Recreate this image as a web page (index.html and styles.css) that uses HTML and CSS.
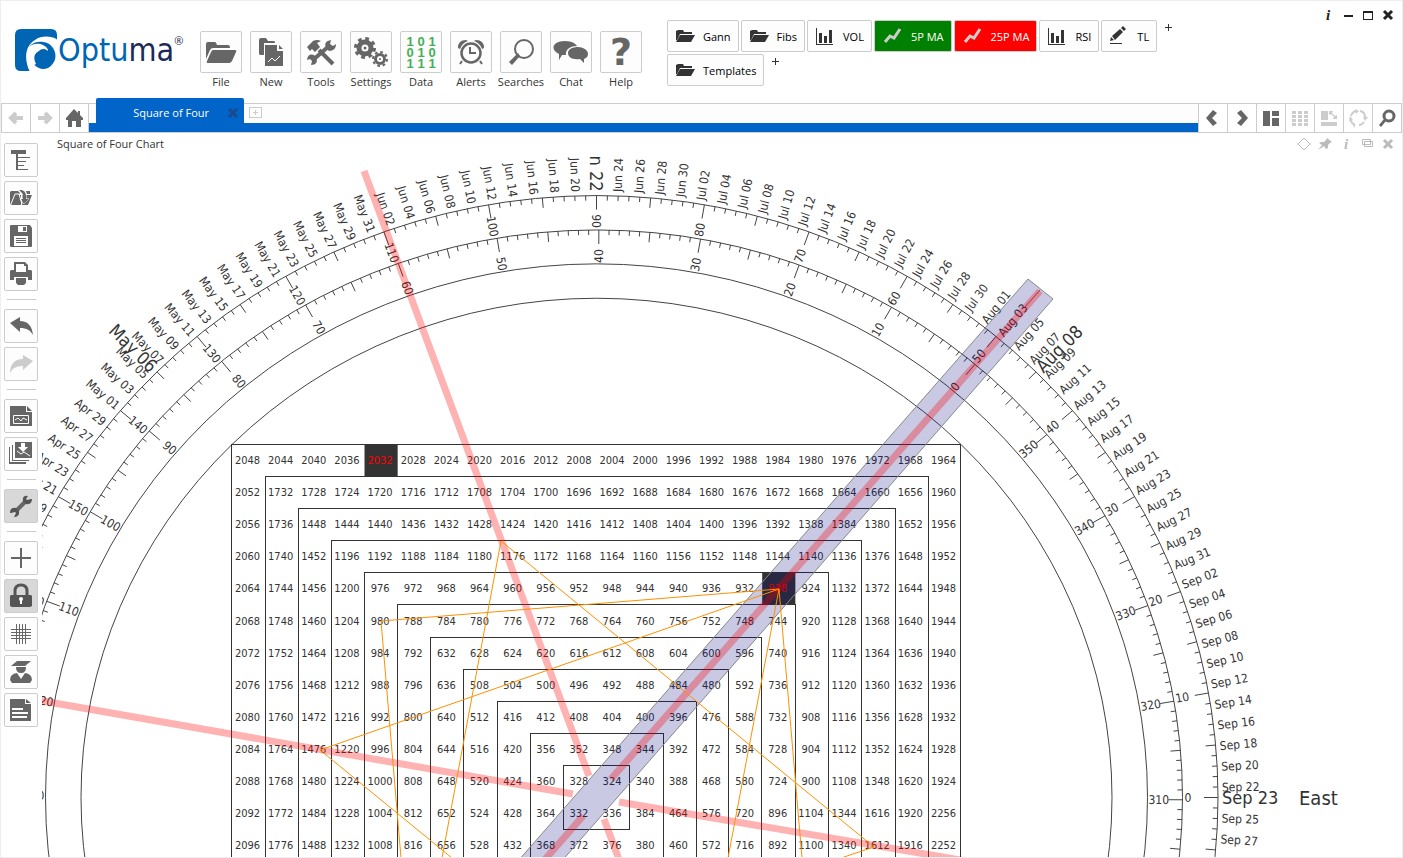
FILE: index.html
```html
<!DOCTYPE html>
<html lang="en">

<head>
    <meta charset="UTF-8">
    <title>Optuma - Square of Four</title>
    <link rel="stylesheet" href="styles.css">
</head>

<body>
    <div class="app">

        <header class="header">
            <a class="logo" href="#" aria-label="Optuma">
                <svg class="logo-mark" viewBox="0 0 42 42">
                    <path fill="#0066b3" d="M6 0H36q6 0 6 6V36q0 6-6 6H6q-6 0-6-6V6Q0 0 6 0z"/>
                    <path fill="#fff" d="M43 11C37 7 27 6 20 11C11 16 8 29 15 43H43z"/>
                    <path fill="#0066b3" d="M14 18C19 11 33 11 38 19C43 27 40 35 33 39C25 42 17 37 17 29L24 20C21 16 17 17 14 18z"/>
                    <path fill="#fff" d="M13 19C17 14 24 14 28 16C32 18 33 20 33 22C29 19 26 20 24 22C19 24 18 29 21 35L17 37C13 32 12 25 13 19z"/>
                </svg>
                <span class="logo-text">Optu<span class="logo-dark">ma</span></span><sup class="logo-reg">®</sup>
            </a>

            <nav class="menu">
                <button class="menu-item">
                    <span class="menu-box"><svg viewBox="0 0 40 40"><path d="M5 27V12q0-2 2-2h7q1 0 2 3h11q2 0 2 3H12q-2 0-3 2z"/><path d="M12 18H34q2 0 1 2l-4 9q-1 2-3 2H7q-2 0-1-2l4-9q1-2 2-2z"/></svg></span>
                    <span class="menu-label">File</span>
                </button>
                <button class="menu-item">
                    <span class="menu-box"><svg viewBox="0 0 40 40"><path d="M8 22V8q0-2 2-2h5l2 3h6q1 0 1 2H13V23H9z"/><path d="M14 13H26v6h6V34H14z"/><path d="M28 13l4 4h-4z"/><path class="cut" d="M17 30l4-4 3 3 5-5"/></svg></span>
                    <span class="menu-label">New</span>
                </button>
                <button class="menu-item">
                    <span class="menu-box"><svg viewBox="0 0 40 40"><path class="stroke4" d="M18 18L32 32M12 28L28 14"/><path d="M6 15l6-6q4-2 8 0l-4 2 3 4-5 5-3-3-2 2z"/><path d="M25 16q-3-7 5-8l-1 4 3 2 3-2q0 7-7 7z"/><path d="M15 25q3 8-5 8l1-4-2-2-3 1q1-7 7-5z"/></svg></span>
                    <span class="menu-label">Tools</span>
                </button>
                <button class="menu-item">
                    <span class="menu-box"><svg viewBox="0 0 40 40"><circle cx="14" cy="16" r="6" fill="none" stroke="#666" stroke-width="5"/><circle cx="14" cy="16" r="9.500" fill="none" stroke="#666" stroke-width="3" stroke-dasharray="3.730"/><circle cx="14" cy="16" r="1.500"/><circle cx="29" cy="27" r="4.500" fill="none" stroke="#666" stroke-width="3"/><circle cx="29" cy="27" r="7" fill="none" stroke="#666" stroke-width="2" stroke-dasharray="2.750"/><circle cx="29" cy="27" r="1"/></svg></span>
                    <span class="menu-label">Settings</span>
                </button>
                <button class="menu-item">
                    <span class="menu-box bits"><span>1</span><span>0</span><span>1</span><span>0</span><span>1</span><span>0</span><span>1</span><span>1</span><span>1</span></span>
                    <span class="menu-label">Data</span>
                </button>
                <button class="menu-item">
                    <span class="menu-box"><svg viewBox="0 0 40 40"><circle cx="20" cy="21" r="9.500" fill="none" stroke="#666" stroke-width="2.500"/><path d="M7 16q0-8 8-8l2 1q-6 2-8 8zM33 16q0-8-8-8l-2 1q6 2 8 8z"/><path class="stroke2" d="M19 15v6h6M11 29l-2 3M29 29l2 3"/></svg></span>
                    <span class="menu-label">Alerts</span>
                </button>
                <button class="menu-item">
                    <span class="menu-box"><svg viewBox="0 0 40 40"><circle cx="23" cy="17" r="9" fill="none" stroke="#666" stroke-width="2"/><path d="M17 21l2 3-8 9-3-3z"/></svg></span>
                    <span class="menu-label">Searches</span>
                </button>
                <button class="menu-item">
                    <span class="menu-box"><svg viewBox="0 0 40 40"><path d="M14 9c7 0 11 3 12 5c-7 0-12 4-11 9l-4 0-3 5V22C-1 18 1 9 14 9z"/><path d="M27 15c5 0 10 3 10 7c0 3-2 4-4 5v4l-4-4C21 28 17 25 17 21c0-4 5-6 10-6z"/></svg></span>
                    <span class="menu-label">Chat</span>
                </button>
                <button class="menu-item">
                    <span class="menu-box menu-help">?</span>
                    <span class="menu-label">Help</span>
                </button>
            </nav>

            <div class="quick">
                <div class="quick-row">
                    <button class="quick-btn"><svg viewBox="0 0 20 20"><path d="M1 14V5l2-1h5l1 2h8v2H5L2 14z"/><path d="M5 9h15l-4 7H1z"/></svg>Gann</button>
                    <button class="quick-btn"><svg viewBox="0 0 20 20"><path d="M1 14V5l2-1h5l1 2h8v2H5L2 14z"/><path d="M5 9h15l-4 7H1z"/></svg>Fibs</button>
                    <button class="quick-btn"><svg viewBox="0 0 20 20"><path d="M1 2h1v16h16v1H1zM4 7h3v10H4zM9 10h3v7H9zM14 4h3v13h-3z"/></svg>VOL</button>
                    <button class="quick-btn green"><svg viewBox="0 0 20 20"><path class="ma" d="M2 16l5-6 4 2 6-9"/></svg>5P MA</button>
                    <button class="quick-btn red"><svg viewBox="0 0 20 20"><path class="ma" d="M2 16l5-6 4 2 6-9"/></svg>25P MA</button>
                    <button class="quick-btn"><svg viewBox="0 0 20 20"><path d="M1 2h1v16h16v1H1zM4 7h3v10H4zM9 10h3v7H9zM14 4h3v13h-3z"/></svg>RSI</button>
                    <button class="quick-btn"><svg viewBox="0 0 20 20"><path d="M1 17h12v1H1zM1 15l1-4 3 3zM3 10l8-7 3 3-8 8zM12 2l2-2 3 3-2 2z"/></svg>TL</button>
                    <button class="quick-add" aria-label="Add tool"></button>
                </div>
                <div class="quick-row">
                    <button class="quick-btn"><svg viewBox="0 0 20 20"><path d="M1 14V5l2-1h5l1 2h8v2H5L2 14z"/><path d="M5 9h15l-4 7H1z"/></svg>Templates</button>
                    <button class="quick-add" aria-label="Add template"></button>
                </div>
            </div>

            <div class="window">
                <button class="info">i</button>
                <button aria-label="Minimise"><svg viewBox="0 0 12 12"><path d="M2 6h9v2H2z"/></svg></button>
                <button aria-label="Maximise"><svg viewBox="0 0 12 12"><path d="M1 2h10v9H1zM2 4v6h8V4z" fill-rule="evenodd"/></svg></button>
                <button aria-label="Close"><svg viewBox="0 0 12 12"><path class="cross" d="M2 2l8 8M10 2l-8 8"/></svg></button>
            </div>
        </header>

        <div class="tabbar">
            <button class="bar-btn off" aria-label="Back"><svg viewBox="0 0 28 28"><path class="arrow" d="M21 14H9M14 9l-5 5 5 5"/></svg></button>
            <button class="bar-btn off" aria-label="Forward"><svg viewBox="0 0 28 28"><path class="arrow" d="M7 14h12M14 9l5 5-5 5"/></svg></button>
            <button class="bar-btn" aria-label="Home"><svg viewBox="0 0 28 28"><path d="M14 5l4 4V7h2v4l3 3v2h-2v7h-5v-6h-4v6H8v-7H6v-2z"/></svg></button>
            <div class="tabs">
                <div class="tab"><span>Square of Four</span><button aria-label="Close tab"><svg viewBox="0 0 12 12"><path class="cross" d="M2 2l8 8M10 2l-8 8"/></svg></button></div>
                <button class="tab-add" aria-label="New tab"></button>
            </div>
            <button class="bar-btn" aria-label="Previous"><svg viewBox="0 0 28 28"><path d="M14 6l4 3-5 5 5 5-4 3-7-8z"/></svg></button>
            <button class="bar-btn" aria-label="Next"><svg viewBox="0 0 28 28"><path d="M13 6l-4 3 5 5-5 5 4 3 7-8z"/></svg></button>
            <button class="bar-btn" aria-label="Layout"><svg viewBox="0 0 28 28"><path d="M6 7h7v15H6zM15 7h7v5h-7zM15 14h7v8h-7z"/></svg></button>
            <button class="bar-btn off" aria-label="Grid"><svg viewBox="0 0 28 28"><path class="cells" d="M8 7v15M14 7v15M20 7v15"/></svg></button>
            <button class="bar-btn off" aria-label="Arrange"><svg viewBox="0 0 28 28"><path d="M6 7h7v9H6zM6 18h16v4H6zM14 7h4l-1 2 3 3 2-1v4h-4l1-2-3-3-2 1z"/></svg></button>
            <button class="bar-btn off" aria-label="Refresh"><svg viewBox="0 0 28 28"><path class="stroke2" d="M7 12q1-4 5-5M16 7q5 1 5 6M20 18q-2 3-5 3M11 21q-4-2-4-5"/><path d="M11 5l4 2-3 3zM19 13h5l-3 4zM11 19v5l-2-3zM5 17l1-5 3 4z"/></svg></button>
            <button class="bar-btn" aria-label="Search"><svg viewBox="0 0 28 28"><circle cx="16" cy="12" r="5" fill="none" stroke="#666" stroke-width="3"/><path d="M11 15l2 2-5 6-2-2z"/></svg></button>
        </div>

        <div class="workspace">
            <aside class="sidebar">
                <button aria-label="Structure"><svg viewBox="0 0 32 32"><path d="M6 6h15v4h-8v3h12v1H13v3h8v1h-8v3h6v1h-6v3h10v1H11V10H6z"/></svg></button>
                <button aria-label="Open"><svg viewBox="0 0 32 32"><path d="M5 22V10l1-1h7l2 2-6 10zM6 23l5-10h5v10zM17 23V13h5l5 0-4 10z"/><path d="M14 8q6-1 6 6"/><path class="cut" d="M6 22l4-10h4l3 10M15 17h3v-4h3v4h3l-5 5z"/><path d="M15 8q6 0 6 6v3h3l-5 5-3-5h2v-3q0-4-3-6zM21 9h4v3h-3z"/></svg></button>
                <button aria-label="Save"><svg viewBox="0 0 32 32"><path fill-rule="evenodd" d="M6 5H25l2 3V26q0 1-1 1H6q-1 0-1-1V6q0-1 1-1zM13 6v6h9V6zM9 16v10h14V16zM18 7h3v4h-3zM11 18h10v1H11zM11 20h10v1H11zM11 22h10v1H11z"/></svg></button>
                <button aria-label="Print"><svg viewBox="0 0 32 32"><path fill-rule="evenodd" d="M9 4h11l3 3v5h3l1 1v9h-4v-3H9v3H5v-9l1-1h3zM11 6v8h10V8h-2V6z"/><path d="M11 20h10v5l-2 2h-6l-2-2z"/></svg></button>
                <hr>
                <button aria-label="Undo"><svg viewBox="0 0 32 32"><path d="M5 13l10-6v4c8 0 12 5 13 14c-3-5-6-7-13-7v4z"/></svg></button>
                <button class="off" aria-label="Redo"><svg viewBox="0 0 32 32"><path d="M28 13L18 7v4C9 11 5 17 5 25c3-5 6-7 13-7v4z"/></svg></button>
                <hr>
                <button aria-label="New chart"><svg viewBox="0 0 32 32"><path d="M5 6h16v6h6v14H5zM22 6l5 5h-5z"/><path class="cut" d="M8.500 15.500h15v8h-15zM10 20l3-2 3 3 2-3 4 2"/></svg></button>
                <button aria-label="Save charts"><svg viewBox="0 0 32 32"><path d="M10 4h17v16H10zM7 7h1v15h16v1H7zM4 9h1v15h16v2H4z"/><path class="cut" d="M12 13l4 3 3-2 6 4"/><path fill="#fff" d="M16 5h4v4h3l-5 5-5-5h3z"/></svg></button>
                <hr>
                <button class="on" aria-label="Tools"><svg viewBox="0 0 32 32"><path class="stroke4" d="M11 21L21 11"/><path d="M26 9l-4 1-1-1 2-3q-6-1-5 5l3 3q6 1 6-5zM6 23l4-1 1 1-2 4q6 0 5-6l-3-3q-6-1-6 5z"/></svg></button>
                <hr>
                <button aria-label="Crosshair"><svg viewBox="0 0 32 32"><path d="M15 6h2v9h9v2h-9v9h-2v-9H6v-2h9z"/></svg></button>
                <button class="on" aria-label="Lock"><svg viewBox="0 0 32 32"><path d="M6 15H26l1 1V26l-2 1H7l-2-1V16z"/><circle cx="16" cy="19" r="2" fill="#fff"/><path fill="#fff" d="M15 20h2v4h-2z"/><path d="M10 15v-4q0-6 6-6t6 6v4" fill="none" stroke="#555" stroke-width="3"/></svg></button>
                <button aria-label="Grid"><svg viewBox="0 0 32 32"><path class="stroke1" d="M11.500 6v20M14.500 6v20M17.500 6v20M20.500 6v20M6 11.500h20M6 14.500h20M6 17.500h20M6 20.500h20"/></svg></button>
                <button aria-label="Training"><svg viewBox="0 0 32 32"><path d="M12 5h14l-6 5H6zM11 11h10q0 6-5 6t-5-6zM5 24q0-6 7-7l4 6 4-6q7 1 7 7l-2 3H7z"/></svg></button>
                <button aria-label="Notes"><svg viewBox="0 0 32 32"><path fill-rule="evenodd" d="M5 5h15v5h6v17H5zM7 14v2h11v-2zM7 18v2h16v-2zM7 22v2h15v-2zM21 5l5 4h-5z"/></svg></button>
            </aside>

            <main class="panel">
                <div class="panel-head">
                    <h1>Square of Four Chart</h1>
                    <div class="panel-tools">
                        <button aria-label="Marker"><svg viewBox="0 0 14 14"><path class="stroke1" d="M7 1l6 6-6 6-6-6z"/></svg></button>
                        <button aria-label="Pin"><svg viewBox="0 0 14 14"><path d="M9 1l5 4-2 1-2 2v3l-2 1-2-3-6 4 4-5-3-2 2-1h3l2-2z"/></svg></button>
                        <button class="info">i</button>
                        <button aria-label="Restore"><svg viewBox="0 0 14 14"><path class="stroke1" d="M4.500 4.500h8v5h-8zM2.500 2.500h8v5h-8z"/></svg></button>
                        <button aria-label="Close"><svg viewBox="0 0 14 14"><path class="cross" d="M3 3l8 8M11 3l-8 8"/></svg></button>
                    </div>
                </div>
                <svg class="chart" id="chart" role="img" aria-label="Square of Four"></svg>
            </main>
        </div>
    </div>

    <script src="script.js"></script>
</body>

</html>
```
FILE: styles.css
```css
* {
  box-sizing: border-box;
}

html,body {
  margin: 0;
  padding: 0;
  font-family: "Open Sans", "Noto Sans", sans-serif;
  font-size: 11px;
  color: #333;
  background: #fff;
}

button {
  margin: 0;
  padding: 0;
  border: 0;
  background: none;
  font: inherit;
  color: inherit;
}

svg {
  display: block;
  fill: #666;
}

.app {
  display: flex;
  flex-direction: column;
  height: 100vh;
  border: 1px solid #eee;
}

.stroke1, .stroke2, .stroke4, .cut, .cross, .arrow, .ma, .cells {
  fill: none;
  stroke: #666;
}

.stroke2 { stroke-width: 2; }
.stroke4 { stroke-width: 4; }
.cut { stroke: #fff; }
.cross { stroke-width: 3; }
.arrow { stroke-width: 4; }
.ma { stroke: #ccc; stroke-width: 3; }
.cells { stroke-width: 4; stroke-dasharray: 3 1; }

/* header */
.header {
  display: flex;
  align-items: flex-start;
  height: 102px;
}

.logo {
  display: flex;
  width: 195px;
  padding: 28px 0 0 14px;
  color: #0066b3;
  text-decoration: none;
}

.logo-mark {
  width: 42px;
  height: 42px;
}

.logo-text {
  margin-left: 1px;
  font: 32px/42px "DejaVu Sans Condensed", "DejaVu Sans", sans-serif;
}

.logo-dark, .logo-reg {
  color: #1b2a57;
}

.logo-reg {
  font-size: 11px;
  line-height: 24px;
}

.menu {
  display: flex;
  padding-top: 30px;
}

.menu-item {
  display: flex;
  flex-direction: column;
  align-items: center;
  width: 50px;
}

.menu-box {
  width: 42px;
  height: 42px;
  border: 1px solid #ccc;
  border-radius: 2px;
  background: #fdfdfd;
}

.menu-help {
  font: bold 38px/40px "DejaVu Sans", sans-serif;
  color: #666;
}

.menu-label {
  margin-top: 2px;
  line-height: 14px;
}

.bits {
  display: grid;
  grid-template-columns: repeat(3, 11px);
  grid-auto-rows: 11px;
  place-content: center;
  font: bold 13px/11px "Liberation Sans", sans-serif;
  color: #44b055;
}

.quick {
  display: flex;
  flex-direction: column;
  gap: 2px;
  margin-left: 21px;
  padding-top: 19px;
}

.quick-row {
  display: flex;
  gap: 2px;
}

.quick-btn {
  display: flex;
  align-items: center;
  gap: 8px;
  height: 32px;
  padding: 0 7px;
  border: 1px solid #ccc;
  border-radius: 2px;
  background: #fdfdfd;
  color: #000;
}

.quick-btn svg {
  width: 20px;
  height: 20px;
  fill: #333;
}

.green {
  background: #008000;
  color: #fff;
}

.red {
  background: #f00;
  color: #fff;
}

.green, .red {
  padding: 0 7px 0 8px;
}

.quick-add {
  width: 7px;
  height: 7px;
  margin: 4px 0 0 6px;
  background: linear-gradient(#333, #333) center / 7px 1px no-repeat, linear-gradient(#333, #333) center / 1px 7px no-repeat;
}

.window {
  display: flex;
  align-items: center;
  gap: 8px;
  margin-left: auto;
  padding: 8px 8px 0 0;
  color: #222;
}

.window button {
  width: 12px;
}

.window svg {
  width: 12px;
  height: 12px;
  fill: #222;
}

.window .cross {
  stroke: #222;
}

.info {
  font: italic bold 15px/12px "Liberation Serif", serif;
}

/* tabs */
.tabbar {
  display: flex;
  height: 30px;
  border: 1px solid #ccc;
}

.bar-btn {
  width: 29px;
  border-right: 1px solid #ccc;
}

.tabs ~ .bar-btn {
  border-right: 0;
  border-left: 1px solid #ccc;
}

.bar-btn svg {
  width: 28px;
  height: 28px;
}

.off svg { fill: #ccc; }
.off .arrow, .off .cells, .off .stroke2 { stroke: #ccc; }

.tabs {
  display: flex;
  flex: 1;
  align-items: flex-end;
  gap: 5px;
  padding-left: 7px;
  border-bottom: 9px solid #0064c8;
  background: #fdfdfd;
}

.tab {
  display: flex;
  align-items: center;
  justify-content: flex-end;
  gap: 18px;
  width: 148px;
  height: 25px;
  padding: 0 5px 0 0;
  border-radius: 2px 2px 0 0;
  background: #0064c8;
  color: #fff;
}

.tab span {
  line-height: 14px;
  margin-top: 4px;
}

.tab button {
  margin-top: 4px;
}

.tab svg {
  width: 12px;
  height: 12px;
}

.tab .cross {
  stroke: #1a4a8c;
}

.tab-add {
  align-self: flex-start;
  width: 13px;
  height: 11px;
  margin-top: 3px;
  border: 1px solid #ccc;
  background: linear-gradient(#ccc, #ccc) center / 5px 1px no-repeat, linear-gradient(#ccc, #ccc) center / 1px 5px no-repeat;
}

/* workspace */
.workspace {
  display: flex;
  flex: 1;
  min-height: 0;
}

.sidebar {
  display: flex;
  flex-direction: column;
  gap: 4px;
  width: 41px;
  padding: 10px 4px 0 3px;
}

.sidebar button {
  width: 34px;
  height: 34px;
  border: 1px solid #ccc;
  border-radius: 2px;
  background: #fdfdfd;
}

.sidebar .on {
  background: #d8d8d8;
}

.sidebar .on svg {
  fill: #555;
}

.sidebar hr {
  width: 29px;
  height: 1px;
  margin: 4px auto 5px;
  border: 0;
  background: #ccc;
}

.panel {
  display: flex;
  flex: 1;
  flex-direction: column;
  min-width: 0;
}

.panel-head {
  display: flex;
  justify-content: space-between;
  height: 24px;
  padding: 4px 7px 0 15px;
}

.panel-head h1 {
  margin: 0;
  font-size: 11px;
  font-weight: normal;
  line-height: 14px;
}

.panel-tools {
  display: flex;
  gap: 7px;
  color: #bbb;
}

.panel-tools button, .panel-tools svg {
  width: 14px;
  height: 14px;
  fill: #bbb;
}

.panel-tools .stroke1, .panel-tools .cross {
  stroke: #bbb;
}

/* chart */
.chart {
  flex: 1;
  width: 100%;
  min-height: 0;
  overflow: hidden;
  font: 12px "DejaVu Sans Condensed", "DejaVu Sans", sans-serif;
  fill: #333;
}

.ring {
  fill: none;
  stroke: #444;
}

.box {
  fill: none;
  stroke: #333;
  shape-rendering: crispEdges;
}

.cell {
  font-size: 11px;
  text-anchor: middle;
}

.mark { fill: #333; }
.cell.hit { fill: #f00; }
.date-big { font-size: 18px; }
.side { font-size: 20px; }
.end { text-anchor: end; }
.band { fill: rgba(0,0,128,.21); stroke: #888; }
.ray { stroke: rgba(255,0,0,.3); stroke-width: 7; }
.pointer { stroke: #a33; }
.star { fill: none; stroke: #ff9000; }
```
FILE: script.js
```js
var chart = document.getElementById("chart");

// centre of the wheel, stretch of the circles, size of one square
var cx = 554.5, cy = 640.5;
var ratio = 0.9685;
var cellW = 33.14, cellH = 32.1;
var rings = [515.5, 551, 586, 621.5];

function add(name, attrs, text) {
    var el = document.createElementNS("http://www.w3.org/2000/svg", name);
    for (var key in attrs) {
        el.setAttribute(key, attrs[key]);
    }
    if (text !== undefined) el.textContent = text;
    chart.appendChild(el);
    return el;
}

function point(rx, ry, angle) {
    var t = angle * Math.PI / 180;
    return [cx + rx * Math.cos(t), cy - ry * Math.sin(t)];
}

function radialText(text, r, gap, angle, cls) {
    var p = point(r + gap, r * ratio + gap, angle);
    var flip = angle >= 90 && angle < 270;
    add("text", {
        "class": cls + (flip ? " end" : ""),
        dy: ".36em",
        transform: "translate(" + p + ") rotate(" + (flip ? 180 - angle : -angle) + ")"
    }, text);
}

function ticks(r, shift) {
    var d = "";
    for (var a = -10; a <= 190; a++) {
        var len = a % 10 == 0 ? 14 : a % 5 == 0 ? 10 : 5;
        d += "M" + point(r, r * ratio, a + shift) + "L" + point(r - len, r * ratio - len, a + shift);
    }
    add("path", { "class": "ring", d: d });
}

// rings and scales
rings.forEach(function (r) {
    add("ellipse", { "class": "ring", cx: cx, cy: cy, rx: r, ry: r * ratio });
});
ticks(rings[3], 0);
ticks(rings[2], -0.23);
for (var a = 0; a <= 180; a += 10) {
    if (a <= 160) radialText(a, rings[2], 2, a, "degree");
    radialText((a + 310) % 360, rings[1], 1, a - 0.23, "degree");
}

// dates, counted back from Sep 23
var anchors = [[-46, -45], [0, 0], [46, 45], [93, 90], [140, 135], [186, 180]];
var months = ["Jan", "Feb", "Mar", "Apr", "May", "Jun", "Jul", "Aug", "Sep", "Oct", "Nov", "Dec"];

function dateAngle(days) {
    for (var i = 1; i < anchors.length; i++) {
        var p = anchors[i - 1], q = anchors[i];
        if (days <= q[0]) {
            return p[1] + (days - p[0]) * (q[1] - p[1]) / (q[0] - p[0]);
        }
    }
}

function dateLabel(days, cls) {
    var date = new Date(2015, 8, 23 - days);
    var day = ("0" + date.getDate()).slice(-2);
    radialText(months[date.getMonth()] + " " + day, rings[3], 4, dateAngle(days), cls);
}

dateLabel(-4, "date");
dateLabel(-2, "date");
for (var n = 1; n < 160; n += 2) {
    if (n != 93) dateLabel(n, "date");
}
[0, 46, 93, 140].forEach(function (n) {
    dateLabel(n, "date-big");
});
add("text", { "class": "side", x: 1257, y: cy, dy: ".36em" }, "East");

// square of four: a spiral from 324, four more on every step
function cell(col, row, value) {
    if (row > 12) return;
    var x = cx + (col - 11) * cellW, y = cy + (row - 11) * cellH;
    var hit = value == 2032 || value == 928;
    if (hit) {
        add("rect", { "class": "mark", x: x, y: y, width: cellW, height: cellH });
    }
    add("text", { "class": "cell" + (hit ? " hit" : ""), x: x + cellW / 2 - 1, y: y + cellH / 2, dy: ".33em" }, value);
}

for (var k = 11; k > 0; k--) {
    add("rect", {
        "class": "box",
        x: Math.floor(cx - k * cellW) + 0.5,
        y: Math.floor(cy - k * cellH) + 0.5,
        width: Math.round(2 * k * cellW),
        height: Math.round(2 * k * cellH)
    });
}

var value = 324;
for (var k = 1; k <= 11; k++) {
    var lo = 11 - k, hi = 10 + k, c = hi, r = 10;
    while (r > lo) { cell(c, r--, value); value += 4; }
    while (c > lo) { cell(c--, r, value); value += 4; }
    while (r < hi) { cell(c, r++, value); value += 4; }
    while (c < hi) { cell(c++, r, value); value += 4; }
    while (r > 10) { cell(c, r--, value); value += 4; }
}

// overlays
add("path", { "class": "band", d: "M986 122L1011 142L456 777L412 777Z" });
[
    [322, 14, 547, 619], [562, 662, 607, 783],
    [-5, 543, 531, 637], [577, 645, 960, 710],
    [998, 134, 569, 622], [541, 659, 436, 779]
].forEach(function (l) {
    add("line", { "class": "ray", x1: l[0], y1: l[1], x2: l[2], y2: l[3] });
});
add("path", { "class": "pointer", d: "M998 133L983 150" });
add("path", { "class": "star", d: "M400 701L459 384L832 690L790 704" });
add("path", { "class": "star", d: "M410 701L278 593L737 432L686 701" });
add("path", { "class": "star", d: "M359 701L339 464L737 432L760 701" });
```
